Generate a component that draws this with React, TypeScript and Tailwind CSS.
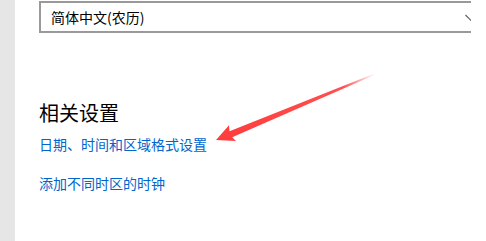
const font = { fontFamily: '"Noto Sans CJK SC", "Noto Sans", sans-serif' };

const Arrow = () => (
  <svg className="absolute left-0 top-0 pointer-events-none" width="486" height="241" viewBox="0 0 486 241">
    <defs>
      <linearGradient id="fade" x1="375" y1="74" x2="216" y2="140" gradientUnits="userSpaceOnUse">
        <stop offset="0" stopColor="#ff3c3c" stopOpacity="0" />
        <stop offset="0.2" stopColor="#ff3c3c" stopOpacity="0.9" />
        <stop offset="1" stopColor="#ff3c3c" stopOpacity="1" />
      </linearGradient>
    </defs>
    <polygon
      points="216,140 236,141 232.2,137.3 375.6,74.5 374.4,73.5 229.5,131.2 229,125.3"
      fill="url(#fade)"
    />
  </svg>
);

export default function App() {
  return (
    <div className="relative flex h-[241px] w-[486px] overflow-hidden bg-white" style={font}>
      <div className="w-[15px] shrink-0 bg-[#e6e6e6]" />
      <main className="flex-1 pl-[24px] pt-[1px]">
        <div className="w-[432px] overflow-hidden">
          <div className="flex h-[32px] w-[460px] items-center justify-between border-2 border-[#999999] pl-[10px] pr-[20px]">
            <span className="text-[14px] leading-[20px] text-black">简体中文(农历)</span>
            <svg width="12" height="8" viewBox="0 0 12 8" className="mt-[1px]">
              <path d="M0.5 1 L6 6.5 L11.5 1" stroke="#606060" strokeWidth="1.2" fill="none" />
            </svg>
          </div>
        </div>

        <h2 className="mt-[66px] text-[20px] font-normal leading-[28px] text-black">相关设置</h2>
        <a className="mt-[7px] block text-[14px] leading-[20px] text-[#0066cc]">日期、时间和区域格式设置</a>
        <a className="mt-[19px] block text-[14px] leading-[20px] text-[#0066cc]">添加不同时区的时钟</a>
      </main>
      <Arrow />
    </div>
  );
}
